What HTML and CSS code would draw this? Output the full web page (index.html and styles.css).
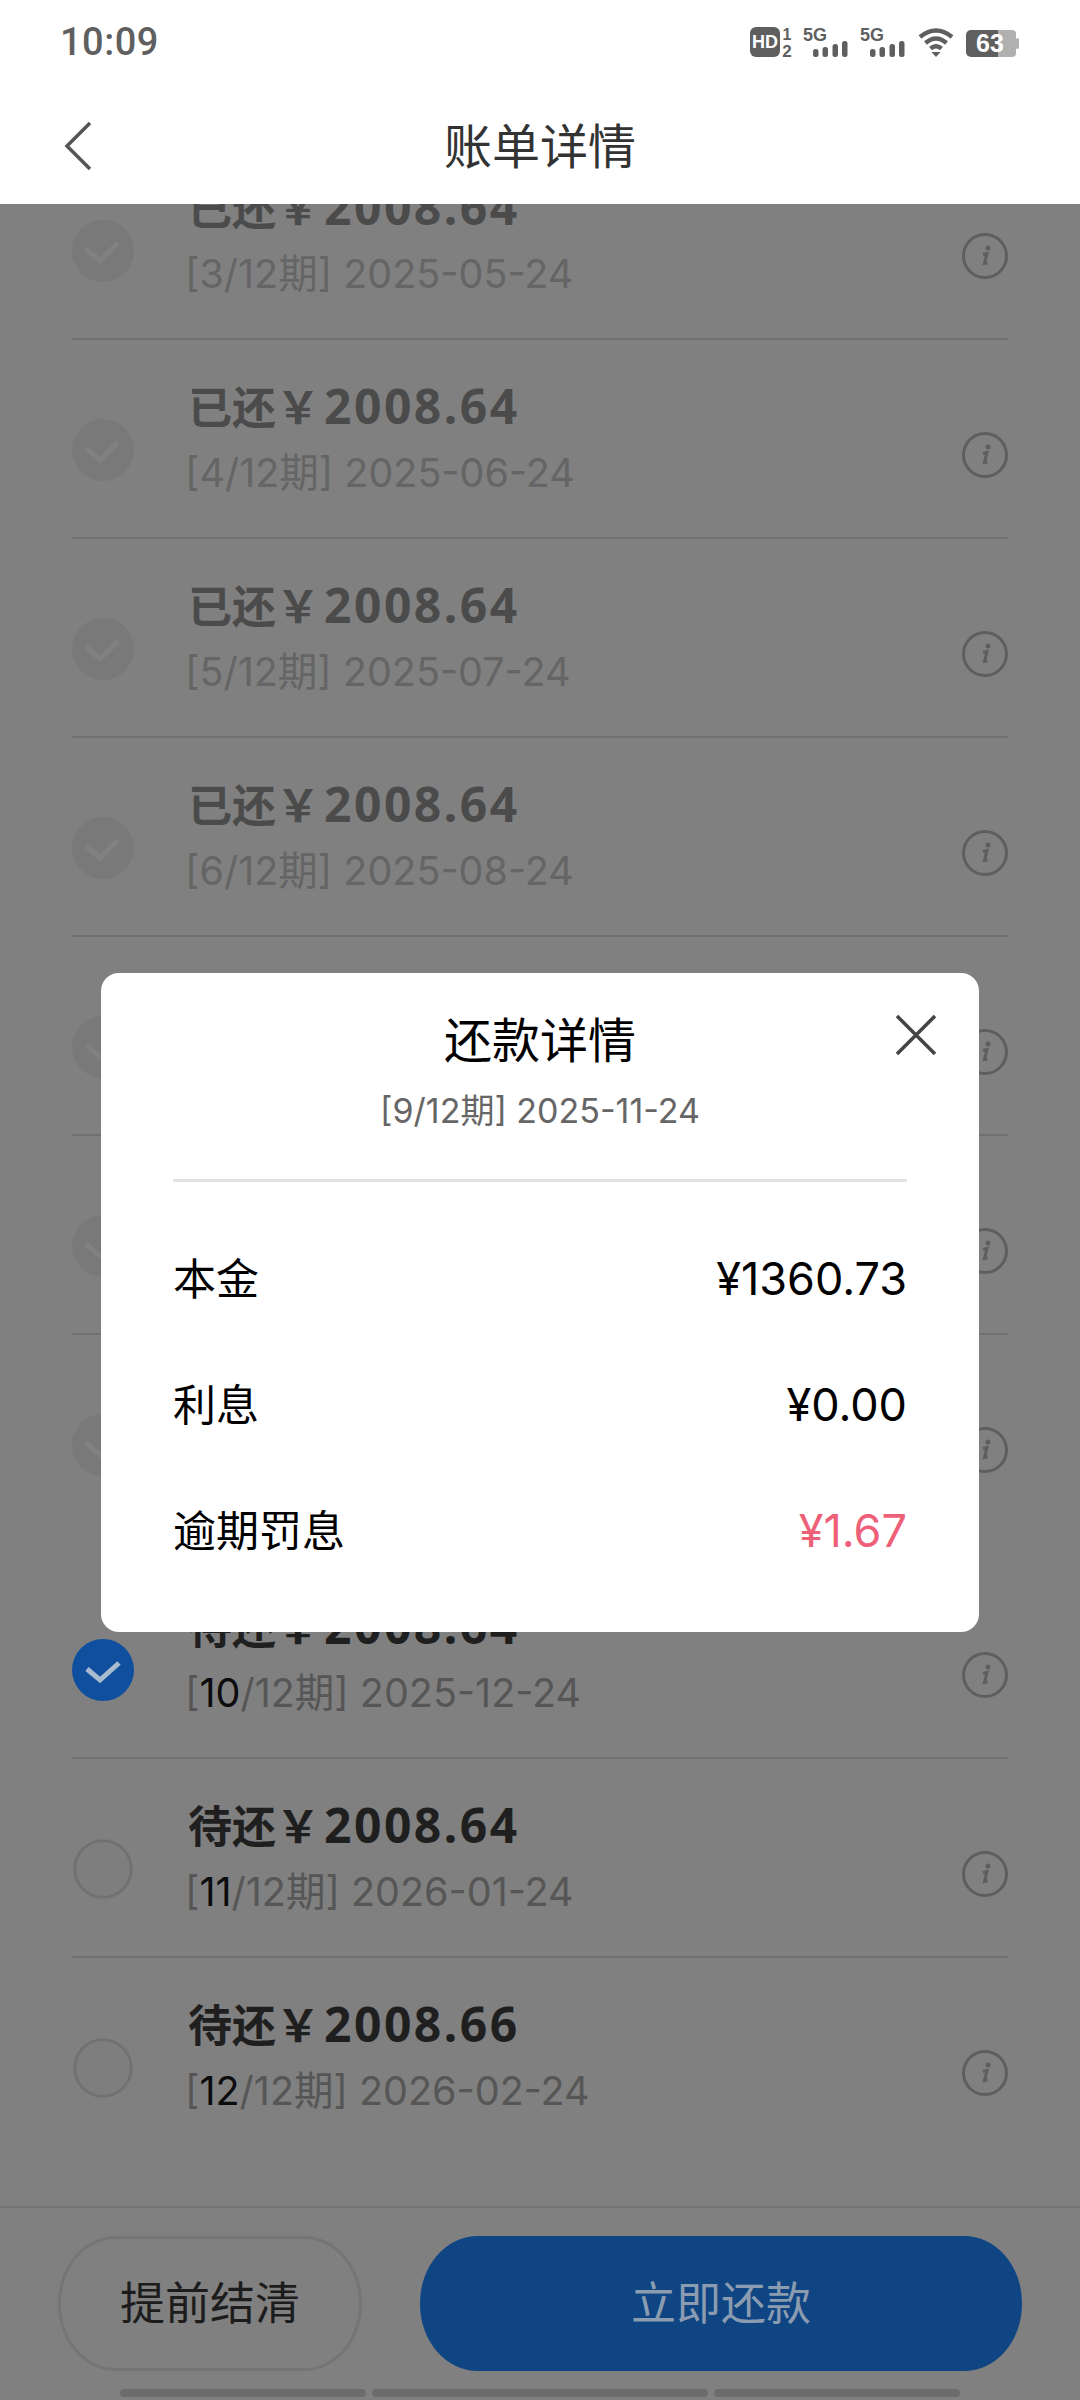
FILE: index.html
```html
<!DOCTYPE html>
<html lang="zh-CN">
<head>
  <meta charset="UTF-8" />
  <meta name="viewport" content="width=device-width, initial-scale=1.0"/>
  <title>账单详情</title>
  <link rel="stylesheet" href="styles.css">
</head>
<body>
  <div class="page">
    <header class="top">
      <div class="status">
        <span class="time">10:09</span>
        <svg class="status-icons" width="270" height="30" viewBox="0 0 270 30">
          <rect width="30" height="30" rx="6" fill="#5f5f5f"/>
          <text x="15" y="21" class="st-text" font-size="18" fill="#fff" text-anchor="middle">HD</text>
          <text x="37" y="13" class="st-text" font-size="16" fill="#5f5f5f" text-anchor="middle">1</text>
          <text x="37" y="30" class="st-text" font-size="17" fill="#5f5f5f" text-anchor="middle">2</text>
          <g fill="#5f5f5f">
            <text x="53" y="14" class="st-text" font-size="19" textLength="24" lengthAdjust="spacingAndGlyphs">5G</text>
            <rect x="63" y="22" width="5.5" height="8" rx="2.5"/>
            <rect x="72.5" y="20" width="5.5" height="10" rx="2.5"/>
            <rect x="82.5" y="17" width="5.5" height="13" rx="2.5"/>
            <rect x="92" y="14" width="5.5" height="16" rx="2.5"/>
          </g>
          <g fill="#5f5f5f" transform="translate(57 0)">
            <text x="53" y="14" class="st-text" font-size="19" textLength="24" lengthAdjust="spacingAndGlyphs">5G</text>
            <rect x="63" y="22" width="5.5" height="8" rx="2.5"/>
            <rect x="72.5" y="20" width="5.5" height="10" rx="2.5"/>
            <rect x="82.5" y="17" width="5.5" height="13" rx="2.5"/>
            <rect x="92" y="14" width="5.5" height="16" rx="2.5"/>
          </g>
          <g fill="none" stroke="#5f5f5f" stroke-width="4.5">
            <path d="M170 10Q186 -3 202 10"/>
            <path d="M175.5 16Q186 7 196.5 16"/>
            <path d="M180.5 21.500Q186 17 191.500 21.500"/>
          </g>
          <path d="M181.500 25L190.500 25L186 30Z" fill="#5f5f5f"/>
          <path d="M248 3H262a4 4 0 0 1 4 4V26a4 4 0 0 1 -4 4H248Z" fill="#b0b0b0"/>
          <rect x="266" y="11" width="3" height="11" rx="1.500" fill="#b0b0b0"/>
          <path d="M248 3H221a5 5 0 0 0 -5 5V25a5 5 0 0 0 5 5H248Z" fill="#5f5f5f"/>
          <text x="240" y="25" class="st-text" font-size="25" fill="#fff" text-anchor="middle">63</text>
        </svg>
      </div>
      <nav class="titlebar">
        <svg class="back" width="28" height="50" viewBox="0 0 28 50">
          <path d="M26 2L3 25L26 48" fill="none" stroke="#555" stroke-width="3.500"/>
        </svg>
        <h1>账单详情</h1>
      </nav>
    </header>

    <main class="content">
      <div class="list">
        <div class="row paid">
          <span class="dot"><svg width="62" height="62" viewBox="0 0 62 62"><path d="M14 29L28 41L46 23" fill="none" stroke="#818181" stroke-width="5"/></svg></span>
          <div class="info"><div class="amount">已还￥<span class="num">2008.64</span></div><div class="date">[3/12期] 2025-05-24</div></div>
          <svg class="tip" width="46" height="46" viewBox="0 0 46 46"><circle cx="23" cy="23" r="21.500" fill="none" stroke-width="3"/><circle class="tip-dot" cx="26" cy="15" r="2.500"/><path d="M21 21.500L25 20.500L22.500 30.500L25.500 30" fill="none" stroke-width="3"/></svg>
        </div>
        <div class="row paid">
          <span class="dot"><svg width="62" height="62" viewBox="0 0 62 62"><path d="M14 29L28 41L46 23" fill="none" stroke="#818181" stroke-width="5"/></svg></span>
          <div class="info"><div class="amount">已还￥<span class="num">2008.64</span></div><div class="date">[4/12期] 2025-06-24</div></div>
          <svg class="tip" width="46" height="46" viewBox="0 0 46 46"><circle cx="23" cy="23" r="21.500" fill="none" stroke-width="3"/><circle class="tip-dot" cx="26" cy="15" r="2.500"/><path d="M21 21.500L25 20.500L22.500 30.500L25.500 30" fill="none" stroke-width="3"/></svg>
        </div>
        <div class="row paid">
          <span class="dot"><svg width="62" height="62" viewBox="0 0 62 62"><path d="M14 29L28 41L46 23" fill="none" stroke="#818181" stroke-width="5"/></svg></span>
          <div class="info"><div class="amount">已还￥<span class="num">2008.64</span></div><div class="date">[5/12期] 2025-07-24</div></div>
          <svg class="tip" width="46" height="46" viewBox="0 0 46 46"><circle cx="23" cy="23" r="21.500" fill="none" stroke-width="3"/><circle class="tip-dot" cx="26" cy="15" r="2.500"/><path d="M21 21.500L25 20.500L22.500 30.500L25.500 30" fill="none" stroke-width="3"/></svg>
        </div>
        <div class="row paid">
          <span class="dot"><svg width="62" height="62" viewBox="0 0 62 62"><path d="M14 29L28 41L46 23" fill="none" stroke="#818181" stroke-width="5"/></svg></span>
          <div class="info"><div class="amount">已还￥<span class="num">2008.64</span></div><div class="date">[6/12期] 2025-08-24</div></div>
          <svg class="tip" width="46" height="46" viewBox="0 0 46 46"><circle cx="23" cy="23" r="21.500" fill="none" stroke-width="3"/><circle class="tip-dot" cx="26" cy="15" r="2.500"/><path d="M21 21.500L25 20.500L22.500 30.500L25.500 30" fill="none" stroke-width="3"/></svg>
        </div>
        <div class="row paid">
          <span class="dot"><svg width="62" height="62" viewBox="0 0 62 62"><path d="M14 29L28 41L46 23" fill="none" stroke="#818181" stroke-width="5"/></svg></span>
          <div class="info"><div class="amount">已还￥<span class="num">2008.64</span></div><div class="date">[7/12期] 2025-09-24</div></div>
          <svg class="tip" width="46" height="46" viewBox="0 0 46 46"><circle cx="23" cy="23" r="21.500" fill="none" stroke-width="3"/><circle class="tip-dot" cx="26" cy="15" r="2.500"/><path d="M21 21.500L25 20.500L22.500 30.500L25.500 30" fill="none" stroke-width="3"/></svg>
        </div>
        <div class="row paid">
          <span class="dot"><svg width="62" height="62" viewBox="0 0 62 62"><path d="M14 29L28 41L46 23" fill="none" stroke="#818181" stroke-width="5"/></svg></span>
          <div class="info"><div class="amount">已还￥<span class="num">2008.64</span></div><div class="date">[8/12期] 2025-10-24</div></div>
          <svg class="tip" width="46" height="46" viewBox="0 0 46 46"><circle cx="23" cy="23" r="21.500" fill="none" stroke-width="3"/><circle class="tip-dot" cx="26" cy="15" r="2.500"/><path d="M21 21.500L25 20.500L22.500 30.500L25.500 30" fill="none" stroke-width="3"/></svg>
        </div>
        <div class="row paid last-paid">
          <span class="dot"><svg width="62" height="62" viewBox="0 0 62 62"><path d="M14 29L28 41L46 23" fill="none" stroke="#818181" stroke-width="5"/></svg></span>
          <div class="info"><div class="amount">已还￥<span class="num">2008.64</span></div><div class="date">[9/12期] 2025-11-24</div></div>
          <svg class="tip" width="46" height="46" viewBox="0 0 46 46"><circle cx="23" cy="23" r="21.500" fill="none" stroke-width="3"/><circle class="tip-dot" cx="26" cy="15" r="2.500"/><path d="M21 21.500L25 20.500L22.500 30.500L25.500 30" fill="none" stroke-width="3"/></svg>
        </div>
        <div class="row current">
          <span class="dot selected"><svg width="62" height="62" viewBox="0 0 62 62"><path d="M15 30L28 41L47 24" fill="none" stroke="#a9bbce" stroke-width="5"/></svg></span>
          <div class="info"><div class="amount">待还￥<span class="num">2008.64</span></div><div class="date">[<b>10</b>/12期] 2025-12-24</div></div>
          <svg class="tip" width="46" height="46" viewBox="0 0 46 46"><circle cx="23" cy="23" r="21.500" fill="none" stroke-width="3"/><circle class="tip-dot" cx="26" cy="15" r="2.500"/><path d="M21 21.500L25 20.500L22.500 30.500L25.500 30" fill="none" stroke-width="3"/></svg>
        </div>
        <div class="row">
          <span class="dot empty"></span>
          <div class="info"><div class="amount">待还￥<span class="num">2008.64</span></div><div class="date">[<b>11</b>/12期] 2026-01-24</div></div>
          <svg class="tip" width="46" height="46" viewBox="0 0 46 46"><circle cx="23" cy="23" r="21.500" fill="none" stroke-width="3"/><circle class="tip-dot" cx="26" cy="15" r="2.500"/><path d="M21 21.500L25 20.500L22.500 30.500L25.500 30" fill="none" stroke-width="3"/></svg>
        </div>
        <div class="row no-line">
          <span class="dot empty"></span>
          <div class="info"><div class="amount">待还￥<span class="num">2008.66</span></div><div class="date">[<b>12</b>/12期] 2026-02-24</div></div>
          <svg class="tip" width="46" height="46" viewBox="0 0 46 46"><circle cx="23" cy="23" r="21.500" fill="none" stroke-width="3"/><circle class="tip-dot" cx="26" cy="15" r="2.500"/><path d="M21 21.500L25 20.500L22.500 30.500L25.500 30" fill="none" stroke-width="3"/></svg>
        </div>
      </div>

      <footer class="actions">
        <button class="btn-outline">提前结清</button>
        <button class="btn-primary">立即还款</button>
      </footer>
      <div class="home-bar">
        <span class="seg-a"></span>
        <span class="seg-b"></span>
        <span class="seg-a"></span>
      </div>

      <div class="modal-layer">
        <section class="modal">
          <svg class="close" width="42" height="42" viewBox="0 0 42 42">
            <path d="M2 2L40 40M40 2L2 40" fill="none" stroke="#444" stroke-width="3.500"/>
          </svg>
          <h2>还款详情</h2>
          <p class="modal-date">[9/12期] 2025-11-24</p>
          <div class="modal-line"></div>
          <div class="detail"><span class="label">本金</span><span class="money">¥1360.73</span></div>
          <div class="detail"><span class="label">利息</span><span class="money">¥0.00</span></div>
          <div class="detail"><span class="label">逾期罚息</span><span class="money late">¥1.67</span></div>
        </section>
      </div>
    </main>
  </div>
</body>
</html>
```
FILE: styles.css
```css
* {
  box-sizing: border-box;
}

body {
  margin: 0;
  padding: 0;
  font-family: Inter, "Noto Sans CJK SC", sans-serif;
  background: #808080;
}

.page {
  width: 1080px;
  height: 2400px;
  display: flex;
  flex-direction: column;
  overflow: hidden;
}

/* top white part */
.top {
  position: relative;
  z-index: 2;
  height: 204px;
  background: #fff;
  flex-shrink: 0;
}

.status {
  height: 84px;
  padding: 0 60px;
  display: flex;
  justify-content: space-between;
  align-items: center;
}

.time {
  font-family: Roboto, sans-serif;
  font-size: 38px;
  font-weight: 500;
  letter-spacing: 0.5px;
  color: #5f5f5f;
}

.status-icons {
  overflow: visible;
}

.st-text {
  font-family: "Liberation Sans", sans-serif;
  font-weight: 700;
}

.titlebar {
  position: relative;
  height: 118px;
  display: flex;
  align-items: center;
  justify-content: center;
}

.titlebar h1 {
  margin: 0;
  font-size: 48px;
  font-weight: 400;
  color: #333;
}

.back {
  position: absolute;
  left: 64px;
  top: 37px;
}

/* list under the dialog */
.content {
  position: relative;
  flex: 1;
  min-height: 0;
  display: flex;
  flex-direction: column;
  background: #808080;
}

.list {
  flex: 1;
  min-height: 0;
  margin-top: -63px;
}

.row {
  height: 199px;
  margin: 0 72px;
  padding-top: 35px;
  display: flex;
  align-items: flex-start;
  border-bottom: 2px solid #707070;
}

.row.last-paid,
.row.no-line {
  border-bottom: none;
}

.row.current {
  height: 225px;
  padding-top: 61px;
}

.dot {
  width: 62px;
  height: 62px;
  margin-top: 44px;
  border-radius: 50%;
  flex-shrink: 0;
  background: #797979;
}

.dot svg {
  display: block;
}

.dot.selected {
  background: #0f4f9e;
}

.dot.empty {
  background: #7e7e7e;
  border: 3px solid #717171;
  transform: scale(0.96);
}

.info {
  flex: 1;
  margin-left: 54px;
}

.amount {
  font-family: "Noto Sans CJK SC", sans-serif;
  font-size: 44px;
  line-height: 60px;
  font-weight: 700;
  color: #1f1f1f;
}

.num {
  margin-left: 4px;
  font-family: "Noto Sans", sans-serif;
  font-size: 48px;
  letter-spacing: 2.5px;
}

.date {
  margin-top: 7px;
  margin-left: -3px;
  font-size: 39.5px;
  line-height: 60px;
  color: #565656;
  white-space: nowrap;
}

.date b {
  font-weight: 400;
  color: #0c0c0c;
}

.paid .amount {
  color: #4b4b4b;
}

.paid .date {
  color: #656565;
}

.tip {
  margin-top: 57px;
  flex-shrink: 0;
  stroke: #5e5e5e;
}

.tip-dot {
  fill: #5e5e5e;
  stroke: none;
}

/* bottom buttons */
.actions {
  height: 165px;
  padding: 28px 58px 0;
  display: flex;
  gap: 58px;
  border-top: 2px solid #747474;
  flex-shrink: 0;
}

.actions button {
  height: 135px;
  padding: 0 0 6px;
  font-family: "Noto Sans CJK SC", sans-serif;
  font-size: 45px;
  border-radius: 58px / 67px;
}

.btn-outline {
  width: 304px;
  background: transparent;
  border: 3px solid #757575;
  color: #1c1c1c;
}

.btn-primary {
  flex: 1;
  background: #0f4583;
  border: none;
  color: #8b9cb1;
}

.home-bar {
  height: 29px;
  padding: 18px 120px 3px;
  display: flex;
  gap: 6px;
  flex-shrink: 0;
}

.home-bar span {
  height: 8px;
  border-radius: 4px;
  background: #6c6c6c;
}

.seg-a {
  width: 246px;
}

.seg-b {
  flex: 1;
}

/* dialog */
.modal-layer {
  position: absolute;
  top: 0;
  left: 0;
  right: 0;
  bottom: 0;
  display: flex;
  align-items: center;
  justify-content: center;
}

.modal {
  position: relative;
  width: 878px;
  height: 659px;
  padding: 34px 72px 38px;
  background: #fff;
  border-radius: 18px;
}

.close {
  position: absolute;
  top: 41px;
  right: 42px;
}

.modal h2 {
  margin: 0;
  font-size: 48px;
  line-height: 68px;
  font-weight: 400;
  text-align: center;
  color: #000;
}

.modal-date {
  margin: 11px 0 0;
  font-size: 34px;
  line-height: 50px;
  text-align: center;
  color: #666;
}

.modal-line {
  height: 3px;
  margin-top: 43px;
  margin-bottom: 34px;
  background: #e2e2e2;
}

.detail {
  height: 126px;
  display: flex;
  justify-content: space-between;
  align-items: center;
  font-size: 43px;
  color: #000;
}

.label {
  margin-bottom: 6px;
}

.money {
  font-size: 45px;
  font-weight: 400;
}

.money.late {
  color: #ee6078;
}
```
